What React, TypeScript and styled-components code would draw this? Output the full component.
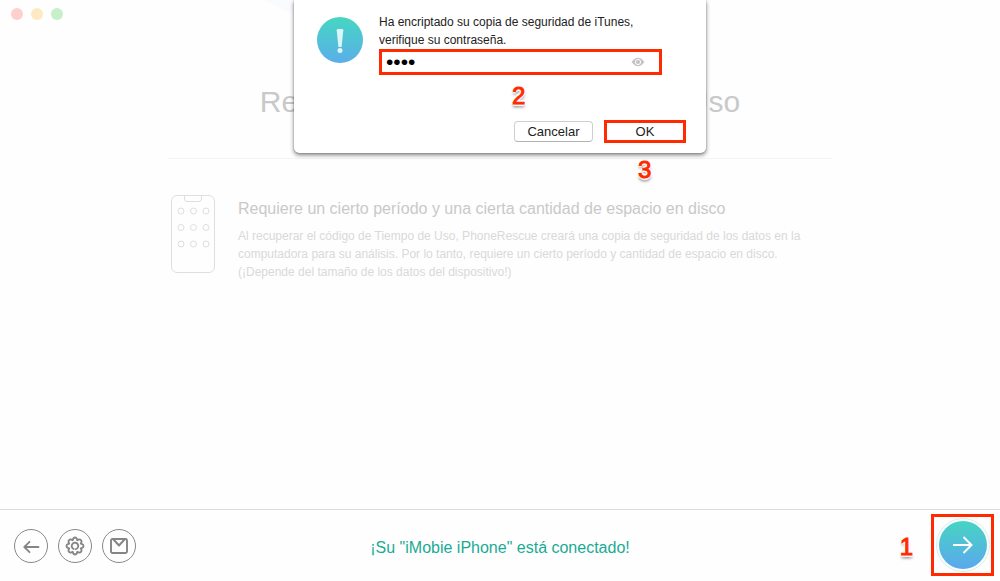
import React from "react";
import styled, { createGlobalStyle } from "styled-components";

const Global = createGlobalStyle`
  * { box-sizing: border-box; }
  body {
    margin: 0;
    background: #fefefe;
    font-family: "Liberation Sans", Arial, sans-serif;
    color: #333;
  }
  button, input { font-family: inherit; }
  h1, h2, p { margin: 0; font-weight: 400; }
`;

const RED = "#ff2a00";

const Window = styled.div`
  position: relative;
  display: flex;
  flex-direction: column;
  min-height: 100vh;
  overflow: hidden;
`;

const Backdrop = styled.svg`
  position: absolute;
  top: 0;
  left: 50%;
  margin-left: -240px;
  width: 480px;
  height: 30px;
`;

const TitleBar = styled.header`
  position: relative;
  display: flex;
  gap: 8px;
  padding: 8px 11px;
`;

const Light = styled.span<{ $color: string }>`
  width: 12px;
  height: 12px;
  border-radius: 50%;
  background: ${(p) => p.$color};
`;

const Content = styled.main`
  position: relative;
  flex: 1;
  width: 100%;
  max-width: 664px;
  margin: 0 auto;
`;

const Title = styled.h1`
  padding: 56px 0 38px;
  border-bottom: 1px solid #f5f5f5;
  font-size: 30px;
  line-height: 36px;
  color: #c9c9c9;
  text-align: center;
  white-space: nowrap;
`;

const Feature = styled.section`
  display: flex;
  gap: 23px;
  padding: 36px 0 0 3px;
`;

const PhoneIcon = styled.svg`
  flex: none;
  width: 44px;
  height: 78px;
`;

const FeatureTitle = styled.h2`
  padding: 4px 0 8px;
  font-size: 16px;
  line-height: 20px;
  color: #c9c9c9;
`;

const FeatureText = styled.p`
  font-size: 12px;
  line-height: 18px;
  color: #d9d9d9;
`;

const Footer = styled.footer`
  position: relative;
  display: grid;
  grid-template-columns: 1fr auto 1fr;
  align-items: center;
  height: 72px;
  padding: 0 6px;
  border-top: 1px solid #dcdcdc;
`;

const Tools = styled.nav`
  display: flex;
  gap: 10px;
  padding-left: 8px;
`;

const RoundButton = styled.button`
  display: grid;
  place-items: center;
  width: 34px;
  height: 34px;
  padding: 0;
  border: 1px solid #888;
  border-radius: 50%;
  background: transparent;
`;

const Status = styled.p`
  padding-top: 4px;
  font-size: 16px;
  line-height: 20px;
  color: #1aab94;
`;

const NextArea = styled.div`
  display: flex;
  justify-content: flex-end;
  align-items: center;
  gap: 18px;
  padding-bottom: 2px;
`;

const NextFrame = styled.div`
  display: grid;
  place-items: center;
  width: 63px;
  height: 62px;
  border: 3px solid ${RED};
`;

const NextButton = styled.button`
  display: grid;
  place-items: center;
  width: 54px;
  height: 54px;
  padding: 2px;
  border: 1px solid #d3f1ec;
  border-radius: 50%;
  background: linear-gradient(#46d4c2, #5ba8ee) content-box;
`;

const Step = styled.span`
  padding-top: 4px;
  font-size: 24px;
  line-height: 24px;
  color: ${RED};
  -webkit-text-stroke: 1px ${RED};
  text-shadow: 2px 0 1px #fff, -2px 0 1px #fff, 0 2px 1px #fff, 0 -2px 1px #fff,
    0 3px 3px rgba(0, 0, 0, 0.6);
`;

const DialogStep = styled(Step)<{ $left: number; $top: number }>`
  position: absolute;
  left: ${(p) => p.$left}px;
  top: ${(p) => p.$top}px;
`;

const Dialog = styled.form`
  position: absolute;
  top: 0;
  left: 50%;
  display: flex;
  gap: 16px;
  width: 412px;
  height: 153px;
  margin-left: -206px;
  padding: 13px 20px 0 23px;
  border-radius: 0 0 5px 5px;
  background: #fff;
  box-shadow: 0 0 1px rgba(0, 0, 0, 0.5), 0 2px 4px rgba(0, 0, 0, 0.5);
`;

const AlertIcon = styled.svg`
  flex: none;
  width: 46px;
  height: 46px;
  margin-top: 4px;
`;

const DialogBody = styled.div`
  flex: 1;
`;

const Message = styled.label`
  display: block;
  font-size: 12px;
  line-height: 18px;
  color: #222;
`;

const PasswordBox = styled.div`
  display: flex;
  align-items: center;
  width: 283px;
  height: 26px;
  padding: 0 14px 0 4px;
  border: 3px solid ${RED};
`;

const PasswordInput = styled.input`
  flex: 1;
  min-width: 0;
  height: 20px;
  padding: 0;
  border: 0;
  outline: 0;
  background: transparent;
  font-size: 21px;
  line-height: 20px;
  color: #000;
`;

const EyeButton = styled.button`
  display: grid;
  padding: 0;
  border: 0;
  background: transparent;
`;

const Actions = styled.div`
  display: flex;
  justify-content: flex-end;
  align-items: center;
  gap: 11px;
  padding-top: 45px;
`;

const ActionButton = styled.button<{ $marked?: boolean }>`
  width: ${(p) => (p.$marked ? 82 : 79)}px;
  height: ${(p) => (p.$marked ? 23 : 21)}px;
  padding: 0;
  border: ${(p) => (p.$marked ? `3px solid ${RED}` : "1px solid #cfcfcf")};
  border-bottom-color: ${(p) => (p.$marked ? RED : "#b4b4b4")};
  border-radius: ${(p) => (p.$marked ? 0 : 4)}px;
  background: #fff;
  font-size: 13px;
  line-height: 16px;
  color: #222;
`;

const LINE = { fill: "none", stroke: "#858585", strokeLinecap: "round", strokeLinejoin: "round" } as const;

export default function App() {
  return (
    <>
      <Global />
      <Window>
        <Backdrop viewBox="0 0 480 30" aria-hidden="true">
          <path d="M4 0 Q18 8 36 15 V0Z" fill="#fafbfe" />
          <path d="M440 0 Q340 34 200 14 V0Z" fill="#fcfdff" />
          <path d="M425 0 Q330 32 200 14 V0Z" fill="#fafcfe" />
          <path d="M268 0 Q306 8 344 0Z" fill="#fefefe" />
        </Backdrop>
        <TitleBar>
          <Light $color="#ffcfce" />
          <Light $color="#ffe9c3" />
          <Light $color="#c5f0ca" />
        </TitleBar>
        <Content>
          <Title>Recuperar código de tiempo de Uso</Title>
          <Feature>
            <PhoneIcon viewBox="0 0 44 78" fill="none" stroke="#dedede" aria-hidden="true">
              <rect x=".5" y=".5" width="43" height="77" rx="5.5" />
              <path d="M13.500 1v3q0 2.500 2.500 2.500h12q2.500 0 2.500-2.500V1" />
              {[16, 32.5, 49].map((y) =>
                [10, 22.5, 35].map((x) => <circle key={`${x}-${y}`} cx={x} cy={y} r="3" />)
              )}
            </PhoneIcon>
            <div>
              <FeatureTitle>Requiere un cierto período y una cierta cantidad de espacio en disco</FeatureTitle>
              <FeatureText>
                Al recuperar el código de Tiempo de Uso, PhoneRescue creará una copia de seguridad de los datos en la
                <br />
                computadora para su análisis. Por lo tanto, requiere un cierto período y cantidad de espacio en disco.
                <br />
                (¡Depende del tamaño de los datos del dispositivo!)
              </FeatureText>
            </div>
          </Feature>
        </Content>
        <Footer>
          <Tools>
            <RoundButton type="button" aria-label="Atrás">
              <svg width="18" height="18" viewBox="0 0 18 18" {...LINE} strokeWidth="1.8">
                <path d="M16.500 10H2.500M7.500 4.800 2.300 10 7.500 15.200" />
              </svg>
            </RoundButton>
            <RoundButton type="button" aria-label="Ajustes">
              <svg width="22" height="22" viewBox="0 0 20 20" {...LINE} strokeWidth="1.7">
                <path d="M8.300 1.900a1.800 1.800 0 0 1 3.400 0l.4 1.200 1.200-.5a1.900 1.900 0 0 1 2.500 2.500l-.5 1.200 1.200.4a1.800 1.800 0 0 1 0 3.400l-1.200.4.5 1.200a1.900 1.900 0 0 1-2.500 2.500l-1.200-.5-.4 1.200a1.800 1.800 0 0 1-3.400 0l-.4-1.200-1.200.5a1.900 1.900 0 0 1-2.500-2.500l.5-1.200-1.200-.4a1.800 1.800 0 0 1 0-3.400l1.200-.4-.5-1.200a1.900 1.900 0 0 1 2.500-2.500l1.200.5z" transform="translate(0 1.600)" />
                <path d="M8.700 12.700a3 3 0 1 1 2 .2" />
              </svg>
            </RoundButton>
            <RoundButton type="button" aria-label="Correo">
              <svg width="18" height="16" viewBox="0 0 18 16" {...LINE} strokeWidth="1.9">
                <rect x="1" y="1" width="16" height="14" rx="1.5" />
                <path d="M3.500 1.500 9 7.500 14.500 1.500" />
              </svg>
            </RoundButton>
          </Tools>
          <Status>¡Su "iMobie iPhone" está conectado!</Status>
          <NextArea>
            <Step>1</Step>
            <NextFrame>
              <NextButton type="button" aria-label="Siguiente">
                <svg width="20" height="18" viewBox="0 0 20 18" fill="none" stroke="#fff" strokeWidth="2">
                  <path d="M0 9H18M10.500 1 18.500 9 10.500 17" />
                </svg>
              </NextButton>
            </NextFrame>
          </NextArea>
        </Footer>
        <Dialog onSubmit={(e) => e.preventDefault()}>
          <AlertIcon viewBox="0 0 46 46" aria-hidden="true">
            <defs>
              <linearGradient id="alert" x1="0" y1="0" x2="0" y2="1">
                <stop offset="0" stopColor="#46d6c2" />
                <stop offset="1" stopColor="#5aaeea" />
              </linearGradient>
            </defs>
            <circle cx="23" cy="23" r="23" fill="url(#alert)" />
            <path d="M19.700 13.300q0-1.300 1.300-1.300h4q1.300 0 1.300 1.300L24.600 30h-3.200z" fill="#dcf5f6" />
            <circle cx="23" cy="33.500" r="2.500" fill="#dcf5f6" />
          </AlertIcon>
          <DialogBody>
            <Message htmlFor="password">
              Ha encriptado su copia de seguridad de iTunes,
              <br />
              verifique su contraseña.
            </Message>
            <PasswordBox>
              <PasswordInput id="password" type="password" defaultValue="1234" />
              <EyeButton type="button" aria-label="Mostrar contraseña">
                <svg width="14" height="10" viewBox="0 0 14 10">
                  <path d="M.5 5Q7-3.500 13.500 5 7 13.500.5 5z" fill="#c4c4c4" />
                  <circle cx="7" cy="5" r="2.6" fill="#c4c4c4" stroke="#fff" />
                </svg>
              </EyeButton>
            </PasswordBox>
            <Actions>
              <ActionButton type="button">Cancelar</ActionButton>
              <ActionButton type="submit" $marked>OK</ActionButton>
            </Actions>
          </DialogBody>
          <DialogStep $left={218} $top={80}>2</DialogStep>
          <DialogStep $left={344} $top={154}>3</DialogStep>
        </Dialog>
      </Window>
    </>
  );
}
